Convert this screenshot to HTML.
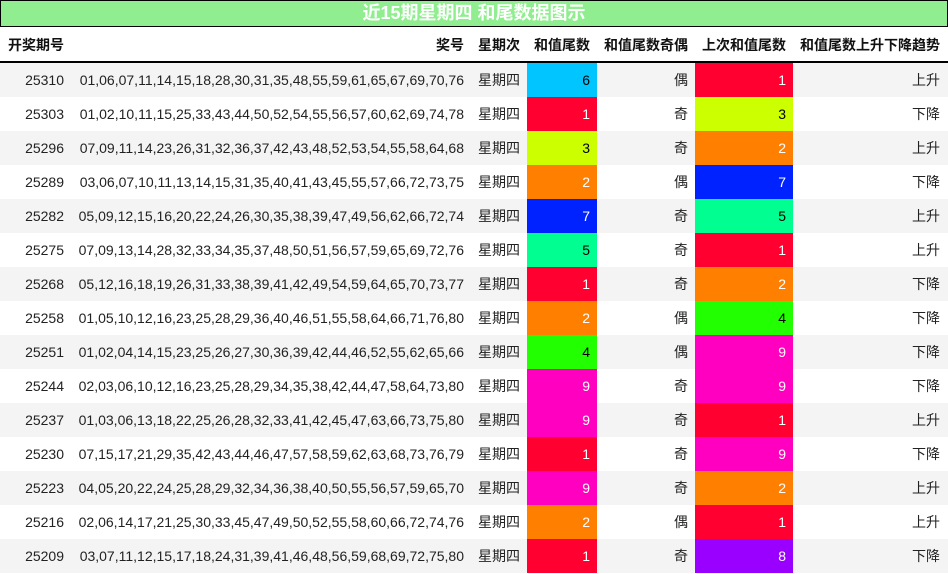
<!DOCTYPE html><html><head><meta charset="utf-8"><style>
*{margin:0;padding:0;box-sizing:border-box}
body{width:948px;height:574px;background:#fff;font-family:"Liberation Sans","Noto Sans CJK SC",sans-serif;font-size:14px;color:#222;position:relative;overflow:hidden}
.t{position:absolute;left:0;top:0;width:948px;height:27px;background:#90ee90;border:1px solid #000;color:#fff;font-weight:bold;font-size:18px;text-align:center;line-height:25px}
.h{position:absolute;top:27px;height:36px;border-bottom:2px solid #000;width:948px}
.c{position:absolute;text-align:right;line-height:34px;height:34px;white-space:nowrap}
.h .c{font-weight:bold;line-height:36px;color:#111}
.r{position:absolute;left:0;width:948px;height:34px}
</style></head><body>
<div class="t">近15期星期四 和尾数据图示</div>
<div class="h">
<div class="c" style="left:8px;text-align:left">开奖期号</div>
<div class="c" style="left:70px;width:394px">奖号</div>
<div class="c" style="left:470px;width:50px">星期次</div>
<div class="c" style="left:527px;width:63px">和值尾数</div>
<div class="c" style="left:597px;width:91px">和值尾数奇偶</div>
<div class="c" style="left:695px;width:91px">上次和值尾数</div>
<div class="c" style="left:793px;width:147px">和值尾数上升下降趋势</div>
</div>
<div id="rows"></div>
<script>
var col={6:['#00c5ff','#000'],1:['#ff0030','#fff'],3:['#ccff00','#000'],2:['#ff8000','#fff'],7:['#0022ff','#fff'],5:['#00ff90','#000'],4:['#22ff00','#000'],9:['#ff00c0','#fff'],8:['#9900ff','#fff']};
var d=[
['25310','01,06,07,11,14,15,18,28,30,31,35,48,55,59,61,65,67,69,70,76',6,'偶',1,'上升'],
['25303','01,02,10,11,15,25,33,43,44,50,52,54,55,56,57,60,62,69,74,78',1,'奇',3,'下降'],
['25296','07,09,11,14,23,26,31,32,36,37,42,43,48,52,53,54,55,58,64,68',3,'奇',2,'上升'],
['25289','03,06,07,10,11,13,14,15,31,35,40,41,43,45,55,57,66,72,73,75',2,'偶',7,'下降'],
['25282','05,09,12,15,16,20,22,24,26,30,35,38,39,47,49,56,62,66,72,74',7,'奇',5,'上升'],
['25275','07,09,13,14,28,32,33,34,35,37,48,50,51,56,57,59,65,69,72,76',5,'奇',1,'上升'],
['25268','05,12,16,18,19,26,31,33,38,39,41,42,49,54,59,64,65,70,73,77',1,'奇',2,'下降'],
['25258','01,05,10,12,16,23,25,28,29,36,40,46,51,55,58,64,66,71,76,80',2,'偶',4,'下降'],
['25251','01,02,04,14,15,23,25,26,27,30,36,39,42,44,46,52,55,62,65,66',4,'偶',9,'下降'],
['25244','02,03,06,10,12,16,23,25,28,29,34,35,38,42,44,47,58,64,73,80',9,'奇',9,'下降'],
['25237','01,03,06,13,18,22,25,26,28,32,33,41,42,45,47,63,66,73,75,80',9,'奇',1,'上升'],
['25230','07,15,17,21,29,35,42,43,44,46,47,57,58,59,62,63,68,73,76,79',1,'奇',9,'下降'],
['25223','04,05,20,22,24,25,28,29,32,34,36,38,40,50,55,56,57,59,65,70',9,'奇',2,'上升'],
['25216','02,06,14,17,21,25,30,33,45,47,49,50,52,55,58,60,66,72,74,76',2,'偶',1,'上升'],
['25209','03,07,11,12,15,17,18,24,31,39,41,46,48,56,59,68,69,72,75,80',1,'奇',8,'下降']];
var h='';
d.forEach(function(r,i){var y=63+i*34;var a=col[r[2]],b=col[r[4]];
h+='<div class="r" style="top:'+y+'px;background:'+(i%2?'#fff':'#f4f4f4')+'">'+
'<div class="c" style="left:0;width:64px">'+r[0]+'</div>'+
'<div class="c" style="left:70px;width:394px">'+r[1]+'</div>'+
'<div class="c" style="left:470px;width:50px">星期四</div>'+
'<div class="c" style="left:527px;width:70px;padding-right:7px;background:'+a[0]+';color:'+a[1]+'">'+r[2]+'</div>'+
'<div class="c" style="left:597px;width:91px">'+r[3]+'</div>'+
'<div class="c" style="left:695px;width:98px;padding-right:7px;background:'+b[0]+';color:'+b[1]+'">'+r[4]+'</div>'+
'<div class="c" style="left:793px;width:147px">'+r[5]+'</div></div>';});
document.getElementById('rows').innerHTML=h;
</script>
</body></html>
